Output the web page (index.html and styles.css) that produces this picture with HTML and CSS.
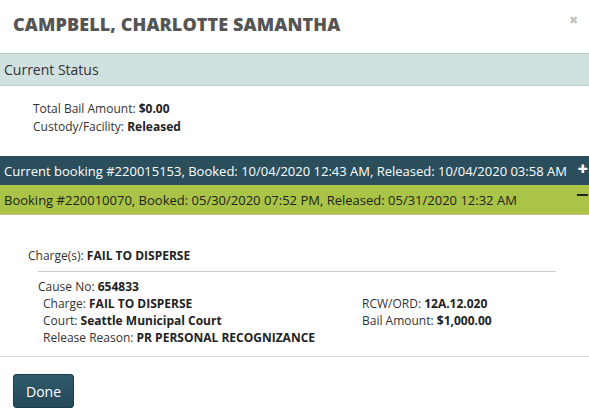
FILE: index.html
```html
<!DOCTYPE html>
<html>
<head>
<meta charset="utf-8">
<link rel="stylesheet" href="styles.css">
</head>
<body>
<div class="modal">
  <div class="header">
    <h1 class="title">CAMPBELL, CHARLOTTE SAMANTHA</h1>
    <span class="close">&#x2716;</span>
  </div>
  <div class="status-bar">Current Status</div>
  <div class="status-body">
    <div>Total Bail Amount: <b>$0.00</b></div>
    <div>Custody/Facility: <b>Released</b></div>
  </div>
  <div class="booking current">
    <span>Current booking #220015153, Booked: 10/04/2020 12:43 AM, Released: 10/04/2020 03:58 AM</span>
    <span class="toggle plus">+</span>
  </div>
  <div class="booking open">
    <span>Booking #220010070, Booked: 05/30/2020 07:52 PM, Released: 05/31/2020 12:32 AM</span>
    <span class="toggle minus"></span>
  </div>
  <div class="booking-body">
    <div class="charges">Charge(s): <b>FAIL TO DISPERSE</b></div>
    <div class="cause">
      <div class="cause-no">Cause No: <b>654833</b></div>
      <div class="cause-grid">
        <div class="col-left">
          <div>Charge: <b>FAIL TO DISPERSE</b></div>
          <div>Court: <b>Seattle Municipal Court</b></div>
          <div>Release Reason: <b>PR PERSONAL RECOGNIZANCE</b></div>
        </div>
        <div class="col-right">
          <div>RCW/ORD: <b>12A.12.020</b></div>
          <div>Bail Amount: <b>$1,000.00</b></div>
        </div>
      </div>
    </div>
  </div>
  <div class="footer">
    <button class="done">Done</button>
  </div>
</div>
</body>
</html>
```
FILE: styles.css
```css
* { box-sizing: border-box; }
html, body { margin: 0; padding: 0; background: #fff; }
body {
  font-family: "Open Sans", "Liberation Sans", sans-serif;
  color: #333;
  width: 589px;
  height: 416px;
  overflow: hidden;
}
b { font-weight: 700; color: #222; }
.header {
  display: flex;
  justify-content: space-between;
  align-items: flex-start;
  height: 53px;
  padding: 0 11px 0 13px;
}
.title {
  margin: 0;
  padding-top: 11px;
  font-size: 18px;
  line-height: 26px;
  font-weight: 800;
  color: #555;
  letter-spacing: 0.1px;
}
.close {
  font-size: 11px;
  color: #c4c4c4;
  padding-top: 14px;
  line-height: 12px;
}
.status-bar {
  height: 33px;
  background: #d1e1e1;
  border-top: 1px solid #bcd3d0;
  border-bottom: 1px solid #bcd3d0;
  font-size: 14px;
  line-height: 31px;
  padding-left: 4px;
  color: #333;
}
.status-body {
  padding: 14px 0 0 33px;
  font-size: 12px;
  line-height: 18px;
  height: 70px;
}
.booking {
  display: flex;
  justify-content: space-between;
  align-items: center;
  height: 29px;
  padding: 0 0 0 4px;
  font-size: 13px;
  white-space: nowrap;
}
.booking.current {
  background: #2a4e5c;
  color: #fff;
}
.booking.open {
  background: #a9c446;
  color: #222;
  height: 30px;
  border-bottom: 1px solid #c9bd8e;
}
.toggle { width: 14px; display: flex; justify-content: flex-end; }
.plus {
  font-weight: 800;
  font-size: 18px;
  color: #fff;
  line-height: 18px;
  margin-top: -6px;
  padding-right: 1px;
}
.minus { padding-right: 1px; }
.minus::before {
  content: "";
  display: block;
  width: 11px;
  height: 2px;
  background: #222;
  margin-top: -6px;
}
.booking-body {
  padding: 32px 33px 0 28px;
  font-size: 12px;
  line-height: 17px;
  height: 142px;
  border-bottom: 1px solid #ddd;
}
.cause {
  margin: 7px 0 0 10px;
  border-top: 1px solid #ccc;
  padding-top: 6px;
}
.cause-grid {
  display: flex;
  padding-left: 5px;
}
.col-left { width: 319px; }
.footer {
  padding: 17px 13px 0 13px;
}
.done {
  font-family: "Open Sans", "Liberation Sans", sans-serif;
  font-size: 14px;
  color: #fff;
  width: 61px;
  height: 34px;
  border: 1px solid #1e3a46;
  border-radius: 3px;
  background: linear-gradient(#2f5a6b, #24495a);
  padding: 0;
}
```
